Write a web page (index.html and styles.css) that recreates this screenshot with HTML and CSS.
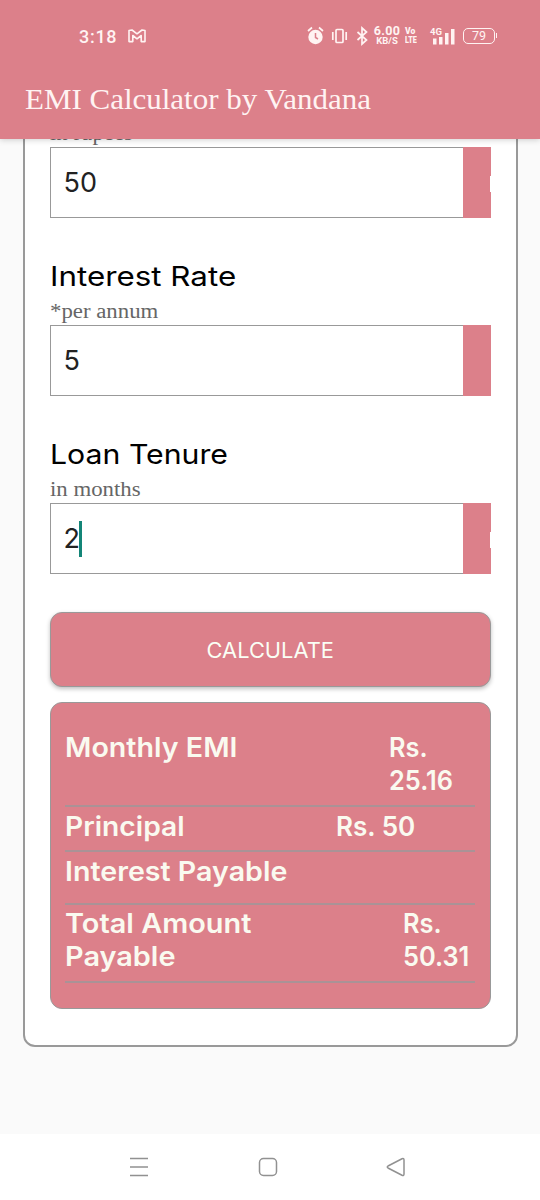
FILE: index.html
```html
<!DOCTYPE html>
<html lang="en">
<head>
<meta charset="utf-8">
<title>EMI Calculator by Vandana</title>
<link rel="stylesheet" href="styles.css">
</head>
<body>
<div class="screen">
  <header class="appbar">
    <div class="status">
      <span class="clock">3:18</span>
      <svg class="gmail" width="18" height="14" viewBox="0 0 18 14"><path d="M1 1.500 4 1 9 4.800 14 1 17 1.500V12.600H13.200V6.500L9 9.800 4.800 6.500V12.600H1Z"/></svg>
      <svg class="sys" width="70" height="24" viewBox="0 0 70 24">
        <circle class="solid" cx="8.500" cy="13" r="7.200"/>
        <path class="line" d="M1 7 5 3.500M12 3.500 16 7"/>
        <path class="cut" d="M8.500 9v4.500l2.500 1.500"/>
        <rect class="line" x="29" y="5.500" width="7" height="13" rx="1"/>
        <path class="line" d="M25.800 8v8M39.200 8v8"/>
        <path class="line" d="M50.500 8 59.500 16 55 20V4L59.500 8 50.500 16"/>
      </svg>
      <span class="rate"><b>6.00</b><small>KB/S</small></span>
      <span class="volte"><b class="vo">Vo</b><b class="lte">LTE</b></span>
      <span class="signal"><i>4G</i>
        <svg width="29" height="18" viewBox="0 0 29 18"><path class="solid" d="M5 11.500h3.500v6H5zM11 10h3.500v7.500H11zM17 6h3.500v11.500H17zM23 2h3.500v15.500H23z"/></svg>
      </span>
      <span class="battery">79</span>
    </div>
    <h1 class="title"><span>EMI Calculator by Vandana</span></h1>
  </header>

  <main class="scroll">
    <form class="card">
      <div class="field first">
        <div class="hint"><span class="hint-text">in rupees</span></div>
        <div class="input notch"><span class="value">50</span></div>
      </div>
      <div class="field">
        <label class="label"><span class="label-text">Interest Rate</span></label>
        <div class="hint"><span class="hint-text">*per annum</span></div>
        <div class="input"><span class="value">5</span></div>
      </div>
      <div class="field">
        <label class="label"><span class="label-text tenure">Loan Tenure</span></label>
        <div class="hint"><span class="hint-text">in months</span></div>
        <div class="input notch"><span class="value">2</span><span class="caret"></span></div>
      </div>
      <button class="calc" type="button"><span>CALCULATE</span></button>
      <section class="results">
        <div class="row emi"><span class="name">Monthly EMI</span><span class="amount">Rs.<br>25.16</span></div>
        <div class="row principal"><span class="name">Principal</span><span class="amount">Rs. 50</span></div>
        <div class="row interest"><span class="name">Interest Payable</span></div>
        <div class="row total"><span class="name">Total Amount<br>Payable</span><span class="amount">Rs.<br>50.31</span></div>
      </section>
    </form>
  </main>

  <nav class="navbar">
    <svg width="20" height="20" viewBox="0 0 20 20"><path d="M1 1.500h18M1 10h18M1 18.500h18"/></svg>
    <svg width="20" height="20" viewBox="0 0 20 20"><rect x="1.500" y="1.500" width="17" height="17" rx="4"/></svg>
    <svg width="20" height="20" viewBox="0 0 20 20"><path d="M2 9 16 1.800Q18 1 18 3V17Q18 19 16 18.200L2 11Q.5 10 2 9Z"/></svg>
  </nav>
</div>
</body>
</html>
```
FILE: styles.css
```css
* { box-sizing: border-box; }
body { margin: 0; font-family: Inter, "Liberation Sans", sans-serif; }
.screen { width: 540px; height: 1200px; display: flex; flex-direction: column; overflow: hidden; background: #fafafa; }

.appbar { height: 139px; flex: none; background: #dc808a; color: #fff3f2; position: relative; z-index: 1; box-shadow: 0 1px 6px rgba(0,0,0,.18); }
.status { height: 60px; padding: 13px 0 0 79px; display: flex; align-items: center; }
.status > * { flex: none; }
.clock { font: 500 18px/24px Roboto, sans-serif; letter-spacing: .7px; width: 49px; }
.gmail { fill: none; stroke: #fff3f2; stroke-width: 1.6; stroke-linejoin: round; margin-top: -2px; }
.sys { margin-left: 161px; margin-top: -2px; }
.solid { fill: #fff3f2; }
.line { fill: none; stroke: #fff3f2; stroke-width: 1.700; }
.cut { fill: none; stroke: #dc808a; stroke-width: 1.500; }
.rate { width: 28px; display: flex; flex-direction: column; align-items: center; font-family: Roboto, sans-serif; margin: -1px 0 0 -4px; }
.rate b { font-size: 12.500px; line-height: 10px; font-weight: 700; letter-spacing: .3px; }
.rate small { font-size: 9.500px; line-height: 10px; font-weight: 700; }
.volte { margin: -2px 0 0 4px; width: 13px; display: flex; flex-direction: column; font: 700 9px/8.500px Roboto, sans-serif; }
.vo, .lte { transform-origin: left center; transform: scaleX(.8); }
.vo { transform: scaleX(.95); }
.signal { position: relative; width: 29px; height: 18px; margin: -1px 0 0 10px; }
.signal i { position: absolute; left: 2px; top: 0; font: 700 9.500px/10px Roboto, sans-serif; }
.signal svg { display: block; }
.battery { position: relative; margin: -2px 0 0 6px; width: 32px; height: 16px; border: 1.500px solid #fff3f2; border-radius: 5px; font: 12.500px/14px Roboto, sans-serif; text-align: center; }
.battery::after { content: ""; position: absolute; right: -3px; top: 4px; width: 1px; height: 5px; background: #fff3f2; }
.title { margin: 21px 0 0 25px; font: 400 29px/36px "Liberation Serif", serif; white-space: nowrap; }
.title span, .hint-text, .label-text, .value, .name, .amount, .calc span { display: inline-block; transform-origin: left center; }
.title span { transform: scaleX(1.068); }

.scroll { flex: none; height: 995px; overflow: hidden; display: flow-root; }
.card { width: 495px; height: 951px; margin: -43px 0 0 22.500px; padding: 20px 25px 0; border: 2px solid #999; border-radius: 12px; background: #fff; }
.field { width: 441px; margin-top: 40px; }
.field.first { margin-top: 0; }
.label { display: block; height: 38px; font-size: 27.500px; line-height: 37px; color: #000; }
.label-text { transform: scaleX(1.14); }
.tenure { transform: scaleX(1.1); }
.hint { height: 29px; font: 20px/30px "Liberation Serif", serif; color: #666; }
.hint-text { transform: scaleX(1.14); }
.input { position: relative; height: 71px; border: 1px solid #999; border-right: 28px solid #dc808a; display: flex; align-items: center; padding-left: 13px; font-size: 27px; color: #222; }
.input::before { content: ""; position: absolute; right: -28px; top: -1px; bottom: -1px; width: 28px; background: #dc808a; }
.notch::after { content: ""; position: absolute; right: -28px; top: 28px; width: 1px; height: 16px; background: #fff; }
.caret { width: 3px; height: 36px; margin-left: -1px; background: #138577; }

.calc { display: block; width: 441px; height: 75px; margin: 38px 0 15px; padding: 1px 0 0; background: #dc808a; border: 1px solid #999; border-radius: 12px; color: #fafff5; font: 21px Inter, sans-serif; box-shadow: 0 2px 4px rgba(0,0,0,.25); }
.calc span { transform-origin: center; transform: scaleX(1.04); }
.results { width: 441px; height: 307px; padding: 28px 15px 0 14px; background: #dc808a; border: 1px solid #999; border-radius: 12px; color: #fafaf0; font-size: 27px; font-weight: 600; line-height: 33px; }
.row { display: flex; border-bottom: 2px solid #aa9296; white-space: nowrap; }
.name { width: 271px; transform: scaleX(1.06); }
.amount { transform: scaleX(.94); }
.emi { height: 76px; }
.emi .amount { margin-left: 53px; }
.principal { height: 45px; padding-top: 3px; }
.principal .name { transform: scaleX(1.045); }
.principal .amount { transform: scaleX(.965); }
.interest { height: 53px; padding-top: 3px; }
.total { height: 78px; padding-top: 2px; }
.total .name { transform: scaleX(1.07); }
.total .amount { margin-left: 67px; }

.navbar { flex: none; height: 66px; background: #fff; display: flex; padding: 23px 134px 0 129px; justify-content: space-between; }
.navbar svg { fill: none; stroke: #919191; stroke-width: 1.500; }
```
